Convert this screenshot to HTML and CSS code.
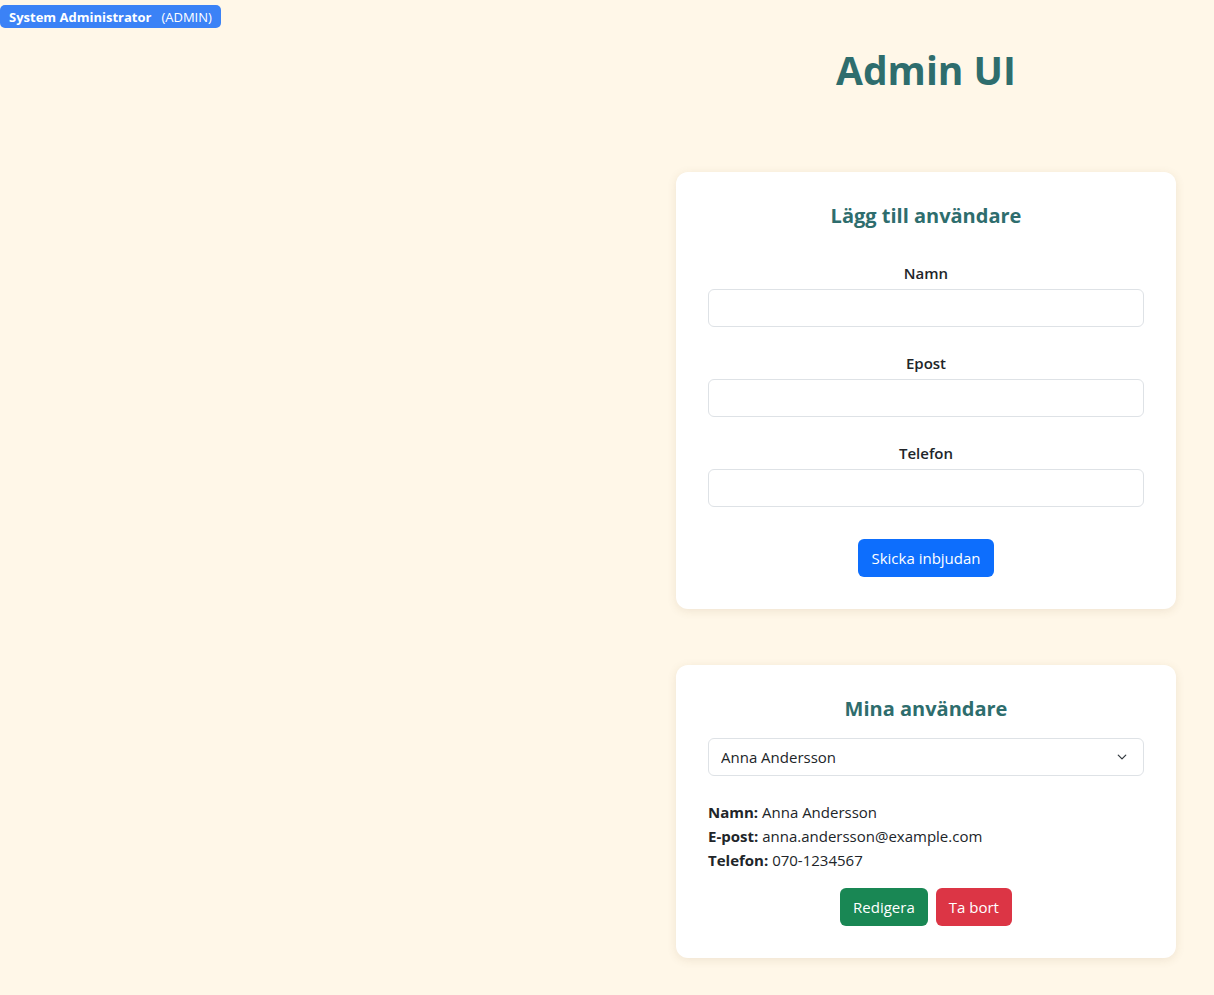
FILE: index.html
```html
<!DOCTYPE html>
<html lang="sv">
<head>
<meta charset="utf-8">
<title>Admin UI</title>
<link rel="stylesheet" href="styles.css">
</head>
<body>
<div class="user-badge"><strong>System Administrator</strong><span class="role">(ADMIN)</span></div>
<div class="layout">
  <div class="left"></div>
  <main class="right">
    <h1 class="page-title">Admin UI</h1>
    <section class="card">
      <h2 class="card-title first">Lägg till användare</h2>
      <form class="form">
        <div class="field">
          <label for="namn">Namn</label>
          <input id="namn" type="text" class="control">
        </div>
        <div class="field">
          <label for="epost">Epost</label>
          <input id="epost" type="email" class="control">
        </div>
        <div class="field">
          <label for="telefon">Telefon</label>
          <input id="telefon" type="text" class="control">
        </div>
        <div class="actions">
          <button type="button" class="btn btn-primary">Skicka inbjudan</button>
        </div>
      </form>
    </section>
    <section class="card">
      <h2 class="card-title">Mina användare</h2>
      <select class="control select">
        <option>Anna Andersson</option>
      </select>
      <div class="details">
        <div><strong>Namn:</strong> Anna Andersson</div>
        <div><strong>E-post:</strong> anna.andersson@example.com</div>
        <div><strong>Telefon:</strong> 070-1234567</div>
      </div>
      <div class="actions tight">
        <button type="button" class="btn btn-success">Redigera</button>
        <button type="button" class="btn btn-danger">Ta bort</button>
      </div>
    </section>
  </main>
</div>
</body>
</html>
```
FILE: styles.css
```css
* { box-sizing: border-box; }
body {
  margin: 0;
  background: #fff7e8;
  font-family: "Open Sans", "Noto Sans", sans-serif;
  font-size: 15px;
  line-height: 24px;
  color: #212529;
}
.user-badge {
  position: absolute;
  top: 5px;
  left: 0;
  height: 23px;
  padding: 0 9px;
  display: flex;
  align-items: center;
  gap: 10px;
  background: #3b82f6;
  color: #fff;
  font-size: 13px;
  border-radius: 5px;
  white-space: nowrap;
}
.user-badge strong { font-weight: 700; }
.layout {
  display: grid;
  grid-template-columns: 1fr 576px;
  min-height: 995px;
}
.right {
  display: flex;
  flex-direction: column;
  align-items: center;
  padding-top: 46px;
}
.page-title {
  margin: 0 0 78px;
  font-size: 39px;
  line-height: 48px;
  font-weight: 700;
  color: #2e6d6d;
}
.card {
  width: 500px;
  background: #fff;
  border-radius: 12px;
  box-shadow: 0 2px 10px rgba(120, 90, 40, 0.12);
  padding: 32px;
  margin-bottom: 56px;
}
.card-title {
  margin: 0 0 17px;
  text-align: center;
  font-size: 20px;
  line-height: 24px;
  font-weight: 700;
  color: #2e6d6d;
}
.card-title.first { margin-bottom: 33px; }
.form { display: flex; flex-direction: column; gap: 24px; }
.field { display: flex; flex-direction: column; align-items: stretch; }
.field label {
  text-align: center;
  font-weight: 600;
  font-size: 15px;
  line-height: 24px;
  margin-bottom: 4px;
}
.control {
  display: block;
  width: 100%;
  height: 38px;
  border: 1px solid #dee2e6;
  border-radius: 6px;
  background: #fff;
  font: inherit;
  color: #212529;
  padding: 6px 12px;
}
.select {
  appearance: none;
  -webkit-appearance: none;
  padding-right: 36px;
  background-image: url("data:image/svg+xml,%3csvg xmlns='http://www.w3.org/2000/svg' viewBox='0 0 16 16'%3e%3cpath fill='none' stroke='%23343a40' stroke-linecap='round' stroke-linejoin='round' stroke-width='2' d='m2 5 6 6 6-6'/%3e%3c/svg%3e");
  background-repeat: no-repeat;
  background-position: right 15px center;
  background-size: 12px 10px;
}
.details { margin: 24px 0 16px; }
.details strong { font-weight: 700; }
.actions { display: flex; justify-content: center; gap: 8px; padding-top: 8px; }
.actions.tight { padding-top: 0; }
.btn {
  height: 38px;
  padding: 0 12px;
  border: 1px solid transparent;
  border-radius: 6px;
  font: inherit;
  color: #fff;
  cursor: pointer;
}
.btn-primary { background: #0d6efd; }
.btn-success { background: #198754; }
.btn-danger { background: #dc3545; }
```
